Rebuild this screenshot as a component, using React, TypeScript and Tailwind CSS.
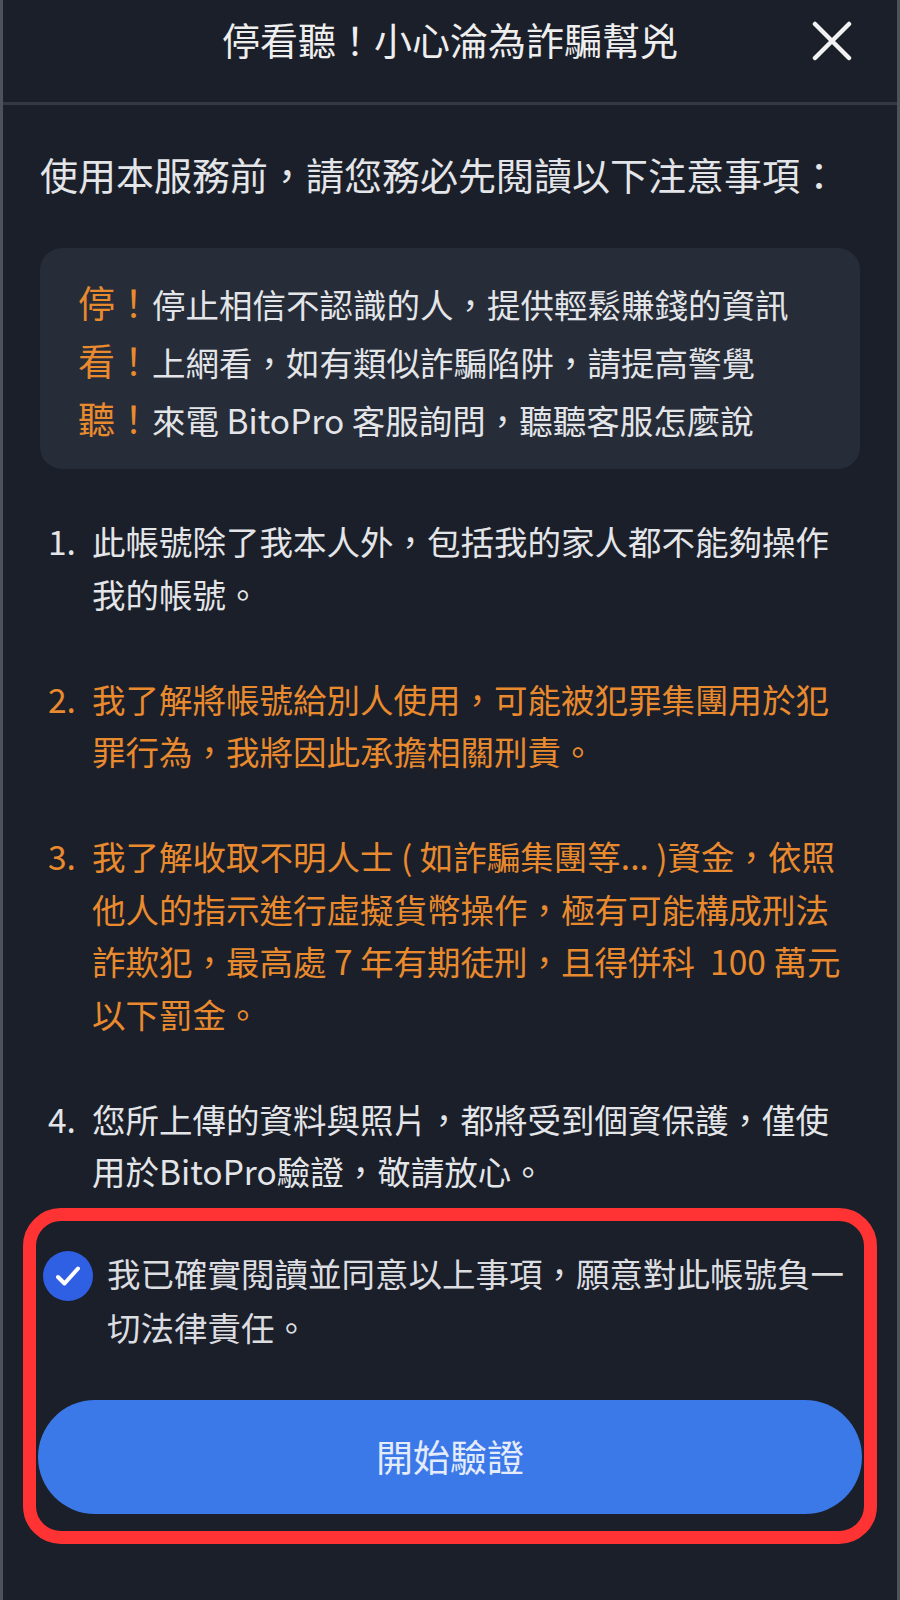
import React from "react";

const lines = {
  callout: [
    { head: "停！", text: "停止相信不認識的人，提供輕鬆賺錢的資訊" },
    { head: "看！", text: "上網看，如有類似詐騙陷阱，請提高警覺" },
    { head: "聽！", text: "來電 BitoPro 客服詢問，聽聽客服怎麼說" },
  ],
};

const items: { num: string; warn?: boolean; rows: string[] }[] = [
  { num: "1.", rows: ["此帳號除了我本人外，包括我的家人都不能夠操作", "我的帳號。"] },
  {
    num: "2.",
    warn: true,
    rows: ["我了解將帳號給別人使用，可能被犯罪集團用於犯", "罪行為，我將因此承擔相關刑責。"],
  },
  {
    num: "3.",
    warn: true,
    rows: [
      "我了解收取不明人士 ( 如詐騙集團等... )資金，依照",
      "他人的指示進行虛擬貨幣操作，極有可能構成刑法",
      "詐欺犯，最高處 7 年有期徒刑，且得併科  100 萬元",
      "以下罰金。",
    ],
  },
  {
    num: "4.",
    rows: ["您所上傳的資料與照片，都將受到個資保護，僅使", "用於BitoPro驗證，敬請放心。"],
  },
];

function CloseIcon() {
  return (
    <svg width="40" height="40" viewBox="0 0 40 40" fill="none">
      <path d="M3 3 37 37 M37 3 3 37" stroke="#f2f2f2" strokeWidth="4.5" strokeLinecap="round" />
    </svg>
  );
}

function CheckCircle() {
  return (
    <div className="flex h-[50px] w-[50px] shrink-0 items-center justify-center rounded-full bg-[#2f5fe3]">
      <svg width="26" height="22" viewBox="0 0 26 22" fill="none">
        <path
          d="M3 12 9.5 18.5 23 3.5"
          stroke="#ffffff"
          strokeWidth="4"
          strokeLinecap="round"
          strokeLinejoin="round"
        />
      </svg>
    </div>
  );
}

export default function App() {
  return (
    <div
      className="h-[1600px] w-[900px] overflow-hidden border-x-[3px] border-[#4d5159] bg-[#1b1f29] text-[#e3e5e8]"
      style={{ fontFamily: '"Noto Sans CJK TC", "Noto Sans", sans-serif' }}
    >
      <header className="relative h-[105px] border-b-[3px] border-[#323844]">
        <h1 className="pt-[16px] text-center text-[38px] leading-[46px] font-normal text-[#eeeeee]">
          停看聽！小心淪為詐騙幫兇
        </h1>
        <button className="absolute right-[45px] top-[21px]">
          <CloseIcon />
        </button>
      </header>

      <main className="px-[37px]">
        <p className="mt-[43px] text-[38px] leading-[52px] whitespace-nowrap">
          使用本服務前，請您務必先閱讀以下注意事項：
        </p>

        <div className="mt-[48px] rounded-[22px] bg-[#262c38] pl-[38px] pr-4 pt-[26px] pb-[21px]">
          {lines.callout.map((l) => (
            <p key={l.head} className="text-[33.5px] leading-[57px] whitespace-nowrap">
              <span className="text-[37px] text-[#e98a2e]">{l.head}</span>
              {l.text}
            </p>
          ))}
        </div>

        <ol className="mt-[46px] pl-[8px]">
          {items.map((it, i) => (
            <li
              key={it.num}
              className={`flex text-[33.5px] leading-[52.5px] ${i > 0 ? "mt-[52.5px]" : ""} ${
                it.warn ? "text-[#e98a2e]" : "text-[#e3e5e8]"
              }`}
            >
              <span className="w-[44px] shrink-0">{it.num}</span>
              <span className="whitespace-pre">
                {it.rows.map((r, j) => (
                  <React.Fragment key={j}>
                    {j > 0 && <br />}
                    {r}
                  </React.Fragment>
                ))}
              </span>
            </li>
          ))}
        </ol>

        <div className="-mx-[17px] mt-[10px] rounded-[38px] border-[13px] border-[#ff3333] px-[2px] pt-[25px] pb-[17px]">
          <div className="flex gap-[14px] pl-[5px]">
            <div className="mt-[5px]">
              <CheckCircle />
            </div>
            <p className="text-[33.5px] leading-[54px] whitespace-nowrap text-[#dcdde0]">
              我已確實閱讀並同意以上事項，願意對此帳號負一
              <br />
              切法律責任。
            </p>
          </div>
          <button className="mt-[46px] flex h-[114px] w-full items-center justify-center rounded-full bg-[#3b78e8] text-[37px] text-[#e4ecfc]">
            開始驗證
          </button>
        </div>
      </main>
    </div>
  );
}
